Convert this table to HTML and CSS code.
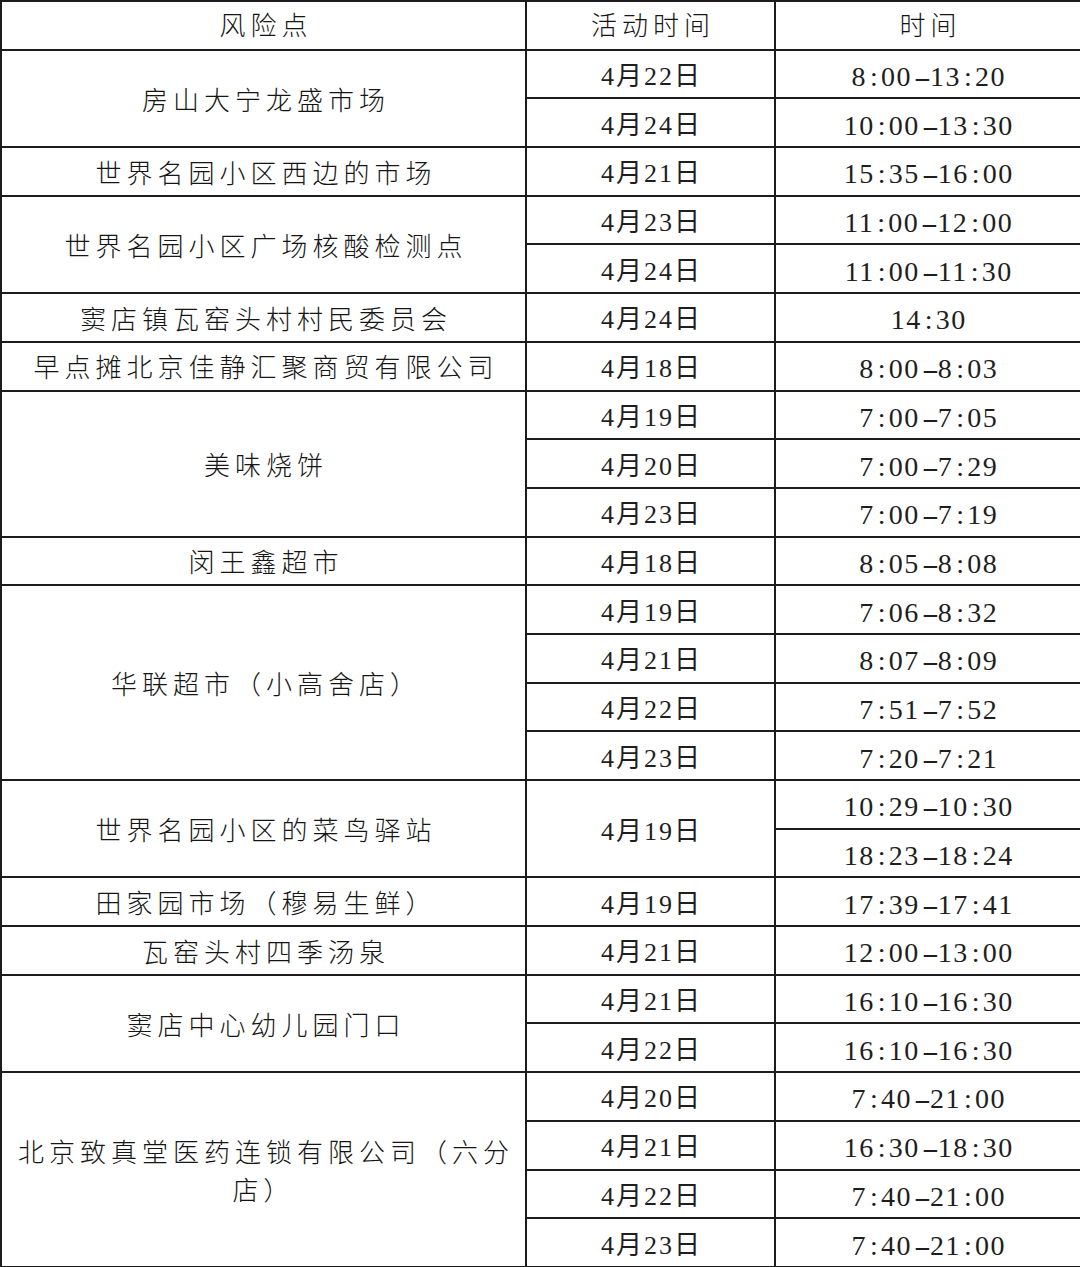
FILE: index.html
```html
<!DOCTYPE html>
<html lang="zh-CN">
<head>
<meta charset="utf-8">
<title>风险点</title>
<link rel="stylesheet" href="styles.css">
</head>
<body>
<table class="risk">
  <colgroup>
    <col class="c-place">
    <col class="c-date">
    <col class="c-time">
  </colgroup>
  <thead>
    <tr><th class="place">风险点</th><th class="hd">活动时间</th><th class="hd">时间</th></tr>
  </thead>
  <tbody>
    <tr><td class="place" rowspan="2">房山大宁龙盛市场</td><td class="date">4月22日</td><td class="time">8<span class="sep">:</span>00<span class="dash">-</span>13<span class="sep">:</span>20</td></tr>
    <tr><td class="date">4月24日</td><td class="time">10<span class="sep">:</span>00<span class="dash">-</span>13<span class="sep">:</span>30</td></tr>
    <tr><td class="place">世界名园小区西边的市场</td><td class="date">4月21日</td><td class="time">15<span class="sep">:</span>35<span class="dash">-</span>16<span class="sep">:</span>00</td></tr>
    <tr><td class="place" rowspan="2">世界名园小区广场核酸检测点</td><td class="date">4月23日</td><td class="time">11<span class="sep">:</span>00<span class="dash">-</span>12<span class="sep">:</span>00</td></tr>
    <tr><td class="date">4月24日</td><td class="time">11<span class="sep">:</span>00<span class="dash">-</span>11<span class="sep">:</span>30</td></tr>
    <tr><td class="place">窦店镇瓦窑头村村民委员会</td><td class="date">4月24日</td><td class="time">14<span class="sep">:</span>30</td></tr>
    <tr><td class="place">早点摊北京佳静汇聚商贸有限公司</td><td class="date">4月18日</td><td class="time">8<span class="sep">:</span>00<span class="dash">-</span>8<span class="sep">:</span>03</td></tr>
    <tr><td class="place" rowspan="3">美味烧饼</td><td class="date">4月19日</td><td class="time">7<span class="sep">:</span>00<span class="dash">-</span>7<span class="sep">:</span>05</td></tr>
    <tr><td class="date">4月20日</td><td class="time">7<span class="sep">:</span>00<span class="dash">-</span>7<span class="sep">:</span>29</td></tr>
    <tr><td class="date">4月23日</td><td class="time">7<span class="sep">:</span>00<span class="dash">-</span>7<span class="sep">:</span>19</td></tr>
    <tr><td class="place">闵王鑫超市</td><td class="date">4月18日</td><td class="time">8<span class="sep">:</span>05<span class="dash">-</span>8<span class="sep">:</span>08</td></tr>
    <tr><td class="place" rowspan="4">华联超市（小高舍店）</td><td class="date">4月19日</td><td class="time">7<span class="sep">:</span>06<span class="dash">-</span>8<span class="sep">:</span>32</td></tr>
    <tr><td class="date">4月21日</td><td class="time">8<span class="sep">:</span>07<span class="dash">-</span>8<span class="sep">:</span>09</td></tr>
    <tr><td class="date">4月22日</td><td class="time">7<span class="sep">:</span>51<span class="dash">-</span>7<span class="sep">:</span>52</td></tr>
    <tr><td class="date">4月23日</td><td class="time">7<span class="sep">:</span>20<span class="dash">-</span>7<span class="sep">:</span>21</td></tr>
    <tr><td class="place" rowspan="2">世界名园小区的菜鸟驿站</td><td class="date" rowspan="2">4月19日</td><td class="time">10<span class="sep">:</span>29<span class="dash">-</span>10<span class="sep">:</span>30</td></tr>
    <tr><td class="time">18<span class="sep">:</span>23<span class="dash">-</span>18<span class="sep">:</span>24</td></tr>
    <tr><td class="place">田家园市场（穆易生鲜）</td><td class="date">4月19日</td><td class="time">17<span class="sep">:</span>39<span class="dash">-</span>17<span class="sep">:</span>41</td></tr>
    <tr><td class="place">瓦窑头村四季汤泉</td><td class="date">4月21日</td><td class="time">12<span class="sep">:</span>00<span class="dash">-</span>13<span class="sep">:</span>00</td></tr>
    <tr><td class="place" rowspan="2">窦店中心幼儿园门口</td><td class="date">4月21日</td><td class="time">16<span class="sep">:</span>10<span class="dash">-</span>16<span class="sep">:</span>30</td></tr>
    <tr><td class="date">4月22日</td><td class="time">16<span class="sep">:</span>10<span class="dash">-</span>16<span class="sep">:</span>30</td></tr>
    <tr><td class="place" rowspan="4">北京致真堂医药连锁有限公司（六分店）</td><td class="date">4月20日</td><td class="time">7<span class="sep">:</span>40<span class="dash">-</span>21<span class="sep">:</span>00</td></tr>
    <tr><td class="date">4月21日</td><td class="time">16<span class="sep">:</span>30<span class="dash">-</span>18<span class="sep">:</span>30</td></tr>
    <tr><td class="date">4月22日</td><td class="time">7<span class="sep">:</span>40<span class="dash">-</span>21<span class="sep">:</span>00</td></tr>
    <tr><td class="date">4月23日</td><td class="time">7<span class="sep">:</span>40<span class="dash">-</span>21<span class="sep">:</span>00</td></tr>
  </tbody>
</table>
</body>
</html>
```

FILE: styles.css
```css
html, body {
  margin: 0;
  padding: 0;
  background: #ffffff;
}

body {
  font-family: "Liberation Serif", "Noto Sans CJK SC", serif;
  color: #1e1e1e;
}

.risk {
  width: 1080px;
  border-collapse: collapse;
  table-layout: fixed;
}

.c-place { width: 525px; }
.c-date { width: 249px; }
.c-time { width: 306px; }

.risk tr {
  height: 48.7px;
}

.risk th,
.risk td {
  border: 2px solid #1c1c1c;
  padding: 0 6px;
  text-align: center;
  vertical-align: middle;
  font-weight: normal;
  line-height: 1.45;
}

.risk th.place,
.risk td.place,
.risk th.hd {
  font-family: "Noto Sans CJK SC", sans-serif;
  font-weight: 300;
  font-size: 26px;
  letter-spacing: 5px;
  text-indent: 5px;
  color: #151515;
}

.risk th {
  padding-bottom: 3px;
}

.risk td.date {
  font-family: "Liberation Serif", "Noto Sans CJK SC", serif;
  font-size: 26px;
  line-height: 1;
  letter-spacing: 2px;
  text-indent: 2px;
  padding-top: 6px;
}

.risk td.time {
  font-family: "Liberation Serif", serif;
  font-size: 28px;
  line-height: 1;
  letter-spacing: 1.5px;
  text-indent: 1.5px;
  padding-top: 6px;
}

.sep {
  display: inline-block;
  width: 14px;
  text-align: center;
}

.dash {
  display: inline-block;
  width: 18px;
  letter-spacing: 0;
  text-align: center;
  transform: scaleX(1.85);
}
```
